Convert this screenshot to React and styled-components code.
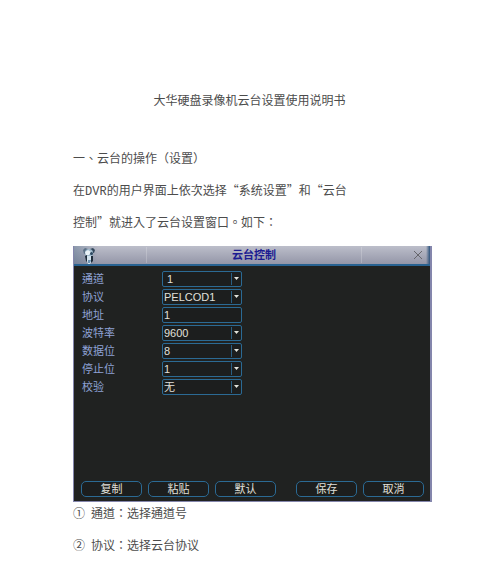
import React from 'react'
import styled, { createGlobalStyle } from 'styled-components'

const fields = [
  { id: 'channel', label: '通道', value: '\u00a01', type: 'select' },
  { id: 'protocol', label: '协议', value: 'PELCOD1', type: 'select' },
  { id: 'address', label: '地址', value: '1', type: 'text' },
  { id: 'baud', label: '波特率', value: '9600', type: 'select' },
  { id: 'databits', label: '数据位', value: '8', type: 'select' },
  { id: 'stopbits', label: '停止位', value: '1', type: 'select' },
  { id: 'parity', label: '校验', value: '无', type: 'select' },
]

function CameraIcon() {
  return (
    <svg width="14" height="17" viewBox="0 0 14 17" aria-hidden="true">
      <path d="M1 3 L3 1 L6 2 L6 5 L2 7 Z" fill="#5c7186" />
      <path d="M8 2 L11 1 L13 3 L12 6 L9 5 Z" fill="#33465a" />
      <ellipse cx="7" cy="6" rx="4" ry="4" fill="#9fb9cc" />
      <path d="M3 5 L6 3 L9 5 L7 8 L4 8 Z" fill="#e8f1f6" />
      <circle cx="9.5" cy="6.5" r="1.5" fill="#2d4860" />
      <path d="M3 9 L5 8 L5 15 L4 14 Z" fill="#1e2c3a" />
      <path d="M5 9 H9 L10 14 L8 17 H6 L5 14 Z" fill="#d3e3ee" />
      <path d="M9 9 L11 9 L11 14 L9 16 Z" fill="#1e2c3a" />
      <path d="M6 13 H9 L8 16 H6 Z" fill="#6f94b4" />
    </svg>
  )
}

function Field(props) {
  const { id, label, value, type } = props.field
  return (
    <Row>
      <Label htmlFor={id}>{label}</Label>
      {type === 'select' ? (
        <SelectBox>
          <Select id={id} defaultValue={value}>
            <option value={value}>{value}</option>
          </Select>
          <Arrow width="10" height="12" viewBox="0 0 10 12" aria-hidden="true">
            <path d="M0.5 0 V12" stroke="#2b5f83" />
            <path d="M3 4 H8 L5.5 7 Z" fill="#e4e4dc" />
          </Arrow>
        </SelectBox>
      ) : (
        <Input id={id} type="text" defaultValue={value} />
      )}
    </Row>
  )
}

function App() {
  return (
    <>
      <GlobalStyle />
      <Page lang="zh-TW">
        <Title>大华硬盘录像机云台设置使用说明书</Title>
        <Heading>一、云台的操作（设置）</Heading>
        <Text>
          在<Latin>DVR</Latin>的用户界面上依次选择“系统设置”和“云台
          <br />
          控制”就进入了云台设置窗口。如下：
        </Text>
        <Dialog>
          <TitleBar>
            <CameraIcon />
            <DialogTitle>云台控制</DialogTitle>
            <CloseButton type="button" aria-label="关闭">
              <svg width="10" height="10" viewBox="0 0 10 10">
                <path d="M1 1 L9 9 M9 1 L1 9" stroke="#66666c" />
              </svg>
            </CloseButton>
          </TitleBar>
          <Form>
            {fields.map((field) => (
              <Field key={field.id} field={field} />
            ))}
          </Form>
          <Footer>
            <ButtonGroup>
              <Button type="button">复制</Button>
              <Button type="button">粘贴</Button>
              <Button type="button">默认</Button>
            </ButtonGroup>
            <ButtonGroup>
              <Button type="button">保存</Button>
              <Button type="button">取消</Button>
            </ButtonGroup>
          </Footer>
        </Dialog>
        <Notes>
          <li><Mark>①</Mark>通道：选择通道号</li>
          <li><Mark>②</Mark>协议：选择云台协议</li>
        </Notes>
      </Page>
    </>
  )
}

const GlobalStyle = createGlobalStyle`
  * {
    box-sizing: border-box;
  }

  body {
    margin: 0;
    background: #fff;
  }

  button, input, select {
    font-family: "Liberation Sans", "Noto Sans CJK SC", sans-serif;
  }
`

const Page = styled.main`
  padding: 84px 68px 0 73px;
  color: #4c4c4c;
  font-family: "Noto Sans CJK TC", sans-serif;
  font-size: 12px;
  line-height: 32px;
`

const Title = styled.h1`
  margin: 0 0 26px;
  padding-right: 6px;
  font-size: 12px;
  font-weight: 400;
  text-align: center;
`

const Heading = styled.h2`
  margin: 0;
  font-size: 12px;
  font-weight: 400;
`

const Text = styled.p`
  margin: 0;
  white-space: nowrap;
`

const Latin = styled.span`
  font-family: "Liberation Mono", monospace;
  line-height: 1;
`

const Dialog = styled.section`
  margin-top: 8px;
  border: solid #8486ac;
  border-width: 0 2px 1px 1px;
  background: #202221;
  font-family: "Liberation Sans", "Noto Sans CJK SC", sans-serif;
  line-height: 16px;
`

const TitleBar = styled.header`
  display: grid;
  grid-template-columns: 16px 1fr 16px;
  align-items: center;
  height: 20px;
  padding: 0 4px 0 8px;
  border-bottom: 2px solid #286291;
  background:
    linear-gradient(to right, rgba(70, 100, 130, 0.4), transparent 24px, transparent calc(100% - 4px), #2c527c),
    linear-gradient(#bcbeca, #9496a8);
`

const DialogTitle = styled.h3`
  margin: 0 48px;
  border: solid rgba(255, 255, 255, 0.2);
  border-width: 0 1px;
  color: #1c1c92;
  font-size: 11px;
  font-weight: 700;
  text-align: center;
`

const CloseButton = styled.button`
  display: flex;
  align-items: center;
  justify-content: center;
  padding: 0;
  border: 0;
  background: none;
`

const Form = styled.form`
  display: grid;
  gap: 2px;
  padding: 5px 8px 0;
`

const Row = styled.div`
  display: grid;
  grid-template-columns: 80px 80px;
  height: 16px;
`

const Label = styled.label`
  color: #8fa3d6;
  font-size: 11px;
`

const SelectBox = styled.div`
  position: relative;
  display: flex;
`

const Select = styled.select`
  appearance: none;
  width: 100%;
  height: 16px;
  padding: 0 12px 0 1px;
  border: 1px solid #2b6a94;
  border-radius: 2px;
  background: #1c1e1e;
  color: #e0e0dc;
  font-size: 11px;
  line-height: 14px;
`

const Input = styled.input`
  width: 100%;
  height: 16px;
  padding: 0 1px;
  border: 1px solid #2b6a94;
  border-radius: 2px;
  background: #1c1e1e;
  color: #e0e0dc;
  font-size: 11px;
`

const Arrow = styled.svg`
  position: absolute;
  top: 2px;
  right: 1px;
  pointer-events: none;
`

const Footer = styled.footer`
  display: flex;
  justify-content: space-between;
  padding: 86px 6px 4px 7px;
`

const ButtonGroup = styled.div`
  display: flex;
  gap: 6px;
`

const Button = styled.button`
  width: 61px;
  height: 16px;
  padding: 0;
  border: 1px solid #2b6a94;
  border-radius: 5px;
  background: #1c1e1e;
  color: #e0e0dc;
  font-size: 11px;
  line-height: 14px;
`

const Notes = styled.ul`
  margin: -5px 0 0;
  padding: 0;
  list-style: none;
`

const Mark = styled.span`
  display: inline-block;
  width: 18px;
`

export default App
